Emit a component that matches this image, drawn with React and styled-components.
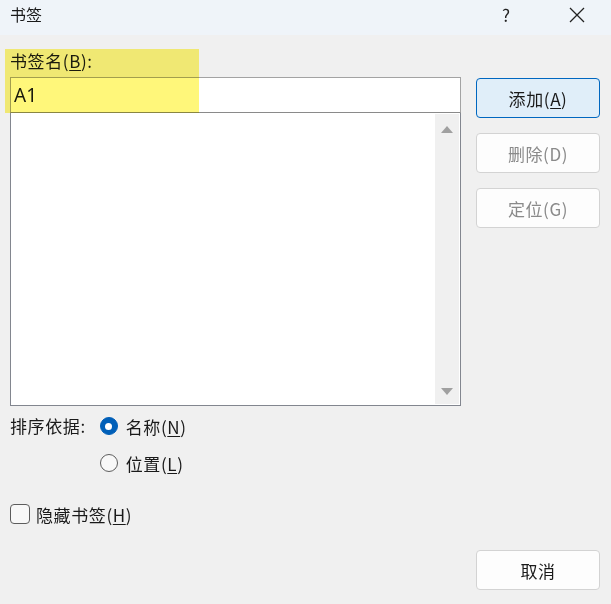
import styled, { createGlobalStyle } from 'styled-components';

const GlobalStyle = createGlobalStyle`
    html, body {
        margin: 0;
        padding: 0;
        background: #f0f0f0;
    }
    body {
        font-family: "Noto Sans CJK SC", "Noto Sans", sans-serif;
        color: #1a1a1a;
    }
`

const Window = styled.div`
    width: 611px;
    height: 604px;
    display: flex;
    flex-direction: column;
    background: #f0f0f0;
    overflow: hidden;
`

const TitleBar = styled.div`
    height: 35px;
    display: flex;
    align-items: center;
    background: #eff4f9;
    padding-left: 10px;
    font-size: 16px;
`

const Title = styled.div`
    flex: 1;
    margin-top: -7px;
`

const TitleButton = styled.div`
    width: ${p => p.$w}px;
    display: flex;
    justify-content: center;
    align-items: center;
    margin-top: -6px;
    font-size: 17px;
    color: #222;
`

const Body = styled.div`
    flex: 1;
    display: flex;
    gap: 15px;
    padding: 14px 11px 14px 10px;
    letter-spacing: 0.6px;
`

const LeftColumn = styled.div`
    width: 451px;
    display: flex;
    flex-direction: column;
    position: relative;
`

const RightColumn = styled.div`
    width: 124px;
    display: flex;
    flex-direction: column;
    gap: 15px;
    padding-top: 29px;
`

const Highlight = styled.div`
    position: absolute;
    left: -5px;
    top: 0;
    width: 194px;
    height: 64px;
    background: #fff77a;
    mix-blend-mode: multiply;
    pointer-events: none;
`

const Label = styled.div`
    font-size: 17px;
    height: 28px;
    line-height: 24px;
`

const Key = styled.span`
    text-decoration: underline;
    text-underline-offset: 2px;
`

const Input = styled.div`
    height: 34px;
    border: 1px solid #a3a3a3;
    border-bottom-color: #8a8a8a;
    background: #fff;
    display: flex;
    align-items: center;
    padding-left: 3px;
    font-size: 19px;
    letter-spacing: 0;
    font-family: "Noto Sans", sans-serif;
`

const ListBox = styled.div`
    height: 290px;
    border: 1px solid #82868f;
    border-top: none;
    background: #fff;
    display: flex;
    justify-content: flex-end;
    padding: 1px;
`

const ScrollBar = styled.div`
    width: 24px;
    background: #f0f0f0;
    display: flex;
    flex-direction: column;
    justify-content: space-between;
    align-items: center;
    padding: 12px 0 9px;
`

const Arrow = styled.div`
    width: 0;
    height: 0;
    border-left: 6px solid transparent;
    border-right: 6px solid transparent;
    ${p => p.$down
        ? 'border-top: 7px solid #a0a0a0;'
        : 'border-bottom: 7px solid #a0a0a0;'}
`

const SortRow = styled.div`
    display: flex;
    gap: 14px;
    margin-top: 8px;
    font-size: 17px;
`

const SortLabel = styled.div`
    line-height: 24px;
`

const RadioGroup = styled.div`
    display: flex;
    flex-direction: column;
    gap: 13px;
`

const Option = styled.label`
    display: flex;
    align-items: center;
    gap: ${p => p.$gap || 8}px;
    height: 24px;
    font-size: 17px;
`

const Radio = styled.span`
    width: 18px;
    height: 18px;
    border-radius: 50%;
    box-sizing: border-box;
    display: flex;
    align-items: center;
    justify-content: center;
    background: ${p => p.$checked ? '#005fb8' : '#f8f8f8'};
    border: 1px solid ${p => p.$checked ? '#005fb8' : '#5d5d5d'};
    &::after {
        content: '';
        width: 7px;
        height: 7px;
        border-radius: 50%;
        background: #fff;
        display: ${p => p.$checked ? 'block' : 'none'};
    }
`

const CheckRow = styled(Option)`
    margin-top: 27px;
`

const Checkbox = styled.span`
    width: 20px;
    height: 20px;
    box-sizing: border-box;
    border: 1px solid #5d5d5d;
    border-radius: 4px;
    background: #f8f8f8;
`

const Button = styled.div`
    height: 40px;
    box-sizing: border-box;
    border-radius: 4px;
    display: flex;
    align-items: center;
    justify-content: center;
    font-size: 17px;
    background: ${p => p.$primary ? '#e0eef9' : '#fdfdfd'};
    border: 1px solid ${p => p.$primary ? '#0067c0' : '#d3d3d3'};
    color: ${p => p.$disabled ? '#8a8a8a' : '#1a1a1a'};
`

const Spacer = styled.div`
    flex: 1;
`

const CloseIcon = () => (
    <svg width="16" height="16" viewBox="0 0 16 16">
        <path d="M1 1L15 15M15 1L1 15" stroke="#222" strokeWidth="1.3" fill="none" />
    </svg>
)

const App = () => {
    return (
        <Window>
            <GlobalStyle />
            <TitleBar>
                <Title>书签</Title>
                <TitleButton $w={74}>?</TitleButton>
                <TitleButton $w={68}><CloseIcon /></TitleButton>
            </TitleBar>
            <Body>
                <LeftColumn>
                    <Label>书签名(<Key>B</Key>):</Label>
                    <Input>A1</Input>
                    <ListBox>
                        <ScrollBar>
                            <Arrow />
                            <Arrow $down />
                        </ScrollBar>
                    </ListBox>
                    <SortRow>
                        <SortLabel>排序依据:</SortLabel>
                        <RadioGroup>
                            <Option><Radio $checked /><span>名称(<Key>N</Key>)</span></Option>
                            <Option><Radio /><span>位置(<Key>L</Key>)</span></Option>
                        </RadioGroup>
                    </SortRow>
                    <CheckRow $gap={6}><Checkbox /><span>隐藏书签(<Key>H</Key>)</span></CheckRow>
                    <Highlight />
                </LeftColumn>
                <RightColumn>
                    <Button $primary><span>添加(<Key>A</Key>)</span></Button>
                    <Button $disabled>删除(D)</Button>
                    <Button $disabled>定位(G)</Button>
                    <Spacer />
                    <Button>取消</Button>
                </RightColumn>
            </Body>
        </Window>
    );
}

export default App;
